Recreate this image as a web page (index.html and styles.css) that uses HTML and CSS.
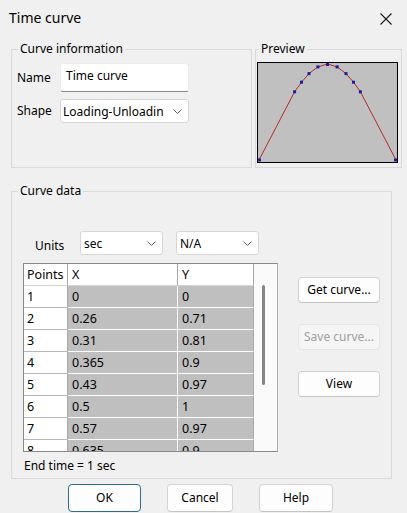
FILE: index.html
```html
<!DOCTYPE html>
<html>
<head>
<meta charset="utf-8">
<title>Time curve</title>
<link rel="stylesheet" href="styles.css">
</head>
<body>
<div class="window">
  <div class="titlebar">
    <span class="title">Time curve</span>
    <svg class="close" width="12" height="12" viewBox="0 0 12 12"><path d="M0.5 0.5 L11.5 11.5 M11.5 0.5 L0.5 11.5" stroke="#1b1b1b" stroke-width="1.1" fill="none"/></svg>
  </div>

  <div class="top-row">
    <fieldset class="group info">
      <legend>Curve information</legend>
      <div class="info-body">
        <span class="lbl">Name</span>
        <div class="textbox">Time curve</div>
        <span class="lbl">Shape</span>
        <div class="select">
          <span>Loading-Unloadin</span>
          <svg class="chev" width="9" height="5" viewBox="0 0 9 5"><polyline points="0.5,0.5 4.5,4.5 8.5,0.5" stroke="#606060" stroke-width="1" fill="none"/></svg>
        </div>
      </div>
    </fieldset>
    <fieldset class="group preview">
      <legend>Preview</legend>
      <div class="plot">
        <svg width="139" height="99" viewBox="0 0 139 99">
          <polyline points="1,97 36.6,28.8 43.5,19.2 51,10.6 59.9,3.9 69.5,1 79.1,3.9 88,10.6 95.5,19.2 102.4,28.8 138,97" fill="none" stroke="#b8282c" stroke-width="1"/>
          <g fill="#1c1ca0">
            <rect x="0" y="95.5" width="3" height="3"/>
            <rect x="35.1" y="27.3" width="3" height="3"/>
            <rect x="42" y="17.7" width="3" height="3"/>
            <rect x="49.5" y="9.1" width="3" height="3"/>
            <rect x="58.4" y="2.4" width="3" height="3"/>
            <rect x="68" y="0" width="3" height="3"/>
            <rect x="77.6" y="2.4" width="3" height="3"/>
            <rect x="86.5" y="9.1" width="3" height="3"/>
            <rect x="94" y="17.7" width="3" height="3"/>
            <rect x="100.9" y="27.3" width="3" height="3"/>
            <rect x="136" y="95.5" width="3" height="3"/>
          </g>
        </svg>
      </div>
    </fieldset>
  </div>

  <fieldset class="group data">
    <legend>Curve data</legend>
    <div class="data-body">
      <div class="units-row">
        <span class="units-lbl">Units</span>
        <div class="select small">
          <span>sec</span>
          <svg class="chev" width="9" height="5" viewBox="0 0 9 5"><polyline points="0.5,0.5 4.5,4.5 8.5,0.5" stroke="#606060" stroke-width="1" fill="none"/></svg>
        </div>
        <div class="select small second">
          <span>N/A</span>
          <svg class="chev" width="9" height="5" viewBox="0 0 9 5"><polyline points="0.5,0.5 4.5,4.5 8.5,0.5" stroke="#606060" stroke-width="1" fill="none"/></svg>
        </div>
      </div>
      <div class="data-main">
        <div class="grid">
          <div class="cells">
            <div class="c hd pt">Points</div><div class="c hd x">X</div><div class="c hd y">Y</div>
            <div class="c pt">1</div><div class="c v x">0</div><div class="c v y">0</div>
            <div class="c pt">2</div><div class="c v x">0.26</div><div class="c v y">0.71</div>
            <div class="c pt">3</div><div class="c v x">0.31</div><div class="c v y">0.81</div>
            <div class="c pt">4</div><div class="c v x">0.365</div><div class="c v y">0.9</div>
            <div class="c pt">5</div><div class="c v x">0.43</div><div class="c v y">0.97</div>
            <div class="c pt">6</div><div class="c v x">0.5</div><div class="c v y">1</div>
            <div class="c pt">7</div><div class="c v x">0.57</div><div class="c v y">0.97</div>
            <div class="c pt">8</div><div class="c v x">0.635</div><div class="c v y">0.9</div>
          </div>
          <div class="vscroll"><div class="thumb"></div></div>
        </div>
        <div class="side-buttons">
          <div class="btn side">Get curve...</div>
          <div class="btn side disabled">Save curve...</div>
          <div class="btn side">View</div>
        </div>
      </div>
      <div class="endtime">End time = 1 sec</div>
    </div>
  </fieldset>

  <div class="footer">
    <div class="btn ok">OK</div>
    <div class="btn cancel">Cancel</div>
    <div class="btn help">Help</div>
  </div>
</div>
</body>
</html>
```

FILE: styles.css
```css
html, body {
  margin: 0;
  padding: 0;
}
body {
  background: #f0f0f0;
  font-family: "Noto Sans", "Open Sans", sans-serif;
  font-size: 12px;
  color: #000;
}
.window {
  width: 407px;
  height: 513px;
  overflow: hidden;
  background: #f0f0f0;
}
.titlebar {
  height: 41px;
  box-sizing: border-box;
  display: flex;
  justify-content: space-between;
  align-items: flex-start;
  padding: 0 15px 0 9px;
}
.title {
  font-size: 14px;
  line-height: 20px;
  margin-top: 8px;
}
.close {
  margin-top: 13px;
  display: block;
}
.top-row {
  display: flex;
  gap: 3px;
  padding-left: 11px;
  height: 127px;
}
fieldset.group {
  margin: 0;
  padding: 0;
  border: 1px solid #d9d9d9;
  box-sizing: border-box;
  min-width: 0;
}
fieldset.group legend {
  padding: 0 2px;
  line-height: 16px;
  font-size: 12px;
  margin-left: 6px;
}
fieldset.info {
  width: 241px;
  height: 127px;
}
.info-body {
  display: grid;
  grid-template-columns: 43px 129px;
  grid-template-rows: 29px 24px;
  row-gap: 7px;
  align-items: center;
  padding: 6px 0 0 5px;
}
.lbl {
  line-height: 16px;
}
.textbox {
  height: 29px;
  box-sizing: border-box;
  background: #fff;
  border: 1px solid #ececec;
  border-bottom-color: #8a8a8a;
  border-radius: 3px;
  display: flex;
  align-items: center;
  padding: 0 0 4px 5px;
}
.select {
  height: 24px;
  box-sizing: border-box;
  background: #fff;
  border: 1px solid #d6d6d6;
  border-radius: 3px;
  display: flex;
  align-items: center;
  justify-content: space-between;
  padding: 0 6px 0 2px;
}
.chev {
  display: block;
}
fieldset.preview {
  width: 147px;
  height: 127px;
}
fieldset.preview legend {
  margin-left: 3px;
}
.plot {
  margin: 5px 0 0 1px;
  width: 141px;
  height: 101px;
  box-sizing: border-box;
  border: 1px solid #000;
  background: #c0c0c0;
}
.plot svg {
  display: block;
}
fieldset.data {
  margin: 15px 0 0 11px;
  width: 381px;
  height: 296px;
}
.data-body {
  padding: 32px 0 0 11px;
}
.units-row {
  display: flex;
  align-items: center;
  height: 24px;
}
.units-lbl {
  margin-left: 12px;
  width: 45px;
  padding-top: 6px;
  line-height: 16px;
}
.select.small {
  width: 83px;
  padding-left: 3px;
}
.select.second {
  margin-left: 13px;
}
.data-main {
  display: flex;
  align-items: flex-start;
  margin-top: 8px;
}
.grid {
  width: 255px;
  height: 189px;
  box-sizing: border-box;
  border: 1px solid #8a8a8a;
  border-right-color: #b0b0b0;
  display: flex;
  overflow: hidden;
  background: #fff;
}
.cells {
  display: grid;
  grid-template-columns: 44px 110px 76px;
  grid-auto-rows: 22px;
  font-size: 12.5px;
}
.c {
  box-sizing: border-box;
  padding-left: 3px;
  line-height: 21px;
  border-right: 1px solid #a8a8a8;
  border-bottom: 1px solid #b8b8b8;
  background: #fff;
  white-space: nowrap;
}
.c.hd {
  border-bottom-color: #d4d4d4;
}
.c.v {
  background: #bfbfbf;
  border-bottom-color: #fff;
}
.c.v.x {
  border-right-color: #fff;
}
.c.x, .c.y {
  padding-left: 4px;
}
.vscroll {
  width: 23px;
  background: #fafafa;
}
.thumb {
  margin: 21px 0 0 8px;
  width: 3px;
  height: 100px;
  border-radius: 2px;
  background: #858585;
}
.side-buttons {
  display: flex;
  flex-direction: column;
  gap: 21px;
  margin: 14px 0 0 20px;
}
.btn {
  box-sizing: border-box;
  height: 26px;
  background: #fdfdfd;
  border: 1px solid #d3d3d3;
  border-bottom-color: #c4c4c4;
  border-radius: 4px;
  display: flex;
  align-items: center;
  justify-content: center;
  line-height: 16px;
}
.btn.side {
  width: 82px;
}
.btn.disabled {
  background: #f5f5f5;
  border-color: #e6e6e6;
  color: #a0a0a0;
}
.endtime {
  margin: 6px 0 0 1px;
  line-height: 16px;
}
.footer {
  display: flex;
  gap: 26px;
  margin-top: 5px;
  padding-left: 68px;
}
.footer .btn {
  height: 28px;
}
.btn.ok {
  width: 73px;
  border-color: #2c6b91;
}
.btn.cancel {
  width: 66px;
}
.btn.help {
  width: 74px;
}
```
